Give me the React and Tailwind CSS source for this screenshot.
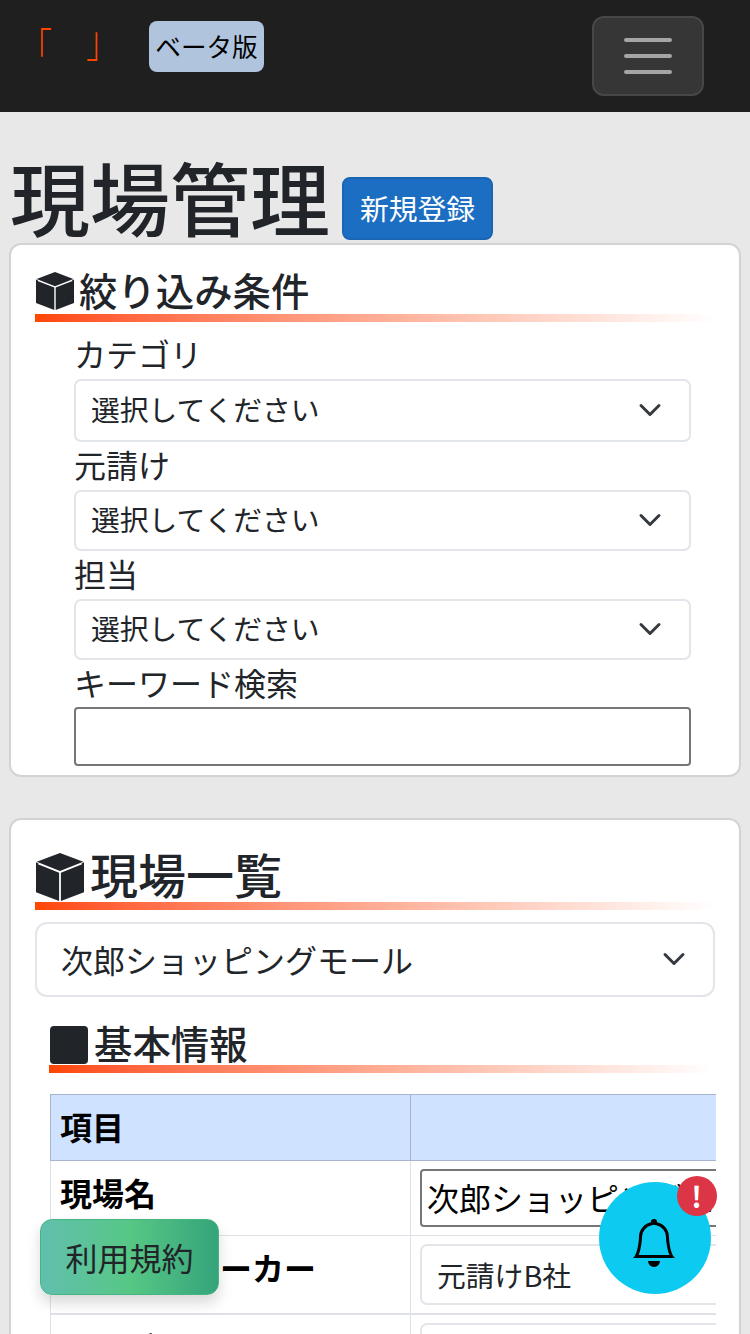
import React from "react";

function Cube({ className }) {
  return (
    <svg viewBox="0 0 38 38" className={className} fill="#212529">
      <path d="M19 0 L37.4 7 L19 14.2 L0.6 7 Z" />
      <path d="M0 7.4 V31 L18.3 38 V15.6 L1.5 9 L2 8.2 Z" />
      <path d="M38 7.4 V31 L19.7 38 V15.6 L36.5 9 L36 8.2 Z" />
    </svg>
  );
}

function Chevron() {
  return (
    <svg viewBox="0 0 16 16" className="h-[24px] w-[24px] shrink-0" fill="none" stroke="#343a40" strokeWidth="2" strokeLinecap="round" strokeLinejoin="round">
      <path d="m2 5 6 6 6-6" />
    </svg>
  );
}

function Rule({ className }) {
  return <div className={"h-[8px] bg-linear-to-r from-[#ff4500] to-white " + className} />;
}

function Field({ label, labelClass, boxClass }) {
  return (
    <div>
      <div className={"pb-[3px] text-[32px] leading-[45px] " + labelClass}>{label}</div>
      <div className={"flex items-center justify-between rounded-[7px] border-2 border-[#e2e5e9] pr-[27px] pb-[2px] pl-[15px] text-[28.8px] " + boxClass}>
        <span className="-mt-[2px] leading-[43px]">選択してください</span>
        <Chevron />
      </div>
    </div>
  );
}

export default function App() {
  return (
    <div className="relative h-[1334px] w-[750px] overflow-hidden bg-[#e8e8e8] text-[#212529] [font-family:'Noto_Sans_CJK_JP',sans-serif]">
      <header className="flex h-[112px] items-start bg-[#1f1f1f]">
        <div className="mt-[20px] ml-[20px] flex w-[129px] gap-[32px] text-[32px] leading-[48px] font-light text-[#ff4500]">
          <span className="translate-y-[2px] scale-y-[1.35]">「</span>
          <span className="translate-x-[2px] -translate-y-[6px] scale-y-[1.35]">」</span>
        </div>
        <div className="mt-[21px] flex h-[51px] w-[115px] items-center justify-center rounded-[8px] bg-[#b0c4de] pb-[2px] text-[25.6px] leading-[38px] text-black">
          ベータ版
        </div>
        <div className="mt-[16px] mr-[46px] ml-auto flex h-[80px] w-[112px] flex-col items-center justify-center gap-[12px] rounded-[12px] border-2 border-[#474747] bg-[#363636]">
          <i className="h-[4px] w-[48px] rounded-full bg-[#a5a5a5]" />
          <i className="h-[4px] w-[48px] rounded-full bg-[#a5a5a5]" />
          <i className="h-[4px] w-[48px] rounded-full bg-[#a5a5a5]" />
        </div>
      </header>

      <div className="flex h-[131px] items-start pl-[10px]">
        <h1 className="mt-[35px] w-[332px] text-[80px] leading-[96px] font-medium whitespace-nowrap">現場管理</h1>
        <button className="mt-[65px] flex h-[63px] w-[151px] items-center justify-center rounded-[8px] border-2 border-[#1a64b4] bg-[#1b6ec2] pb-[2px] text-[28.8px] leading-[43px] whitespace-nowrap text-white">
          新規登録
        </button>
      </div>

      <section className="mx-[9px] h-[534px] rounded-[12px] border-2 border-[#d3d3d3] bg-white px-[24px]">
        <h2 className="flex h-[69px] items-end text-[38.4px] leading-[46px] font-medium">
          <Cube className="mb-[4px] h-[38px] w-[40px]" />
          <span className="mb-[2px] ml-[4px]">絞り込み条件</span>
        </h2>
        <Rule className="" />
        <div className="pr-[24px] pl-[39px]">
          <Field label="カテゴリ" labelClass="mt-[9px]" boxClass="h-[63px]" />
          <Field label="元請け" labelClass="" boxClass="h-[61px]" />
          <Field label="担当" labelClass="" boxClass="h-[61px]" />
          <div className="pb-[2px] text-[32px] leading-[45px]">キーワード検索</div>
          <div className="h-[59px] rounded-[4px] border-2 border-[#767676]" />
        </div>
      </section>

      <section className="mx-[9px] mt-[41px] h-[640px] rounded-[12px] border-2 border-[#d3d3d3] bg-white px-[24px]">
        <h2 className="flex h-[82px] items-end text-[48px] leading-[58px] font-medium">
          <Cube className="mb-[1px] h-[48px] w-[50px]" />
          <span className="ml-[5px]">現場一覧</span>
        </h2>
        <Rule className="" />
        <div className="mt-[12px] flex h-[75px] items-center justify-between rounded-[12px] border-2 border-[#e2e5e9] pr-[27px] pb-[2px] pl-[24px] text-[32px]">
          <span className="leading-[48px]">次郎ショッピングモール</span>
          <Chevron />
        </div>
        <h3 className="ml-[15px] flex h-[68px] items-end text-[38.4px] leading-[46px] font-medium">
          <div className="mb-[1px] h-[38px] w-[38px] rounded-[4px] bg-[#212529]" />
          <span className="ml-[6px]">基本情報</span>
        </h3>
        <Rule className="ml-[14px]" />

        <div className="mt-[21px] ml-[15px] grid w-[666px] grid-cols-[360px_600px] overflow-hidden text-[32px] leading-[48px] text-black">
          <div className="h-[67px] border-y border-l border-[#a6b5cc] bg-[#cfe2ff] pt-[7px] pl-[9px] font-bold">項目</div>
          <div className="h-[67px] border border-[#a6b5cc] bg-[#cfe2ff]" />
          <div className="h-[75px] border-b border-l border-[#dee2e6] pt-[7px] pl-[9px] font-bold">現場名</div>
          <div className="h-[75px] border-b border-l border-[#dee2e6] pt-[8px] pl-[9px]">
            <div className="h-[58px] rounded-[4px] border-2 border-[#767676] pt-[2px] pl-[5px]">次郎ショッピングモール</div>
          </div>
          <div className="h-[79px] border-b-2 border-l border-[#dee2e6] pt-[7px] pl-[9px] font-bold whitespace-nowrap">元請け・メーカー</div>
          <div className="h-[79px] border-b-2 border-l border-[#dee2e6] pt-[8px] pl-[9px]">
            <div className="h-[61px] rounded-[7px] border-2 border-[#e2e5e9] pt-[7px] pl-[15px] text-[28.8px] leading-[43px] text-[#212529]">元請けB社</div>
          </div>
          <div className="h-[79px] border-l border-[#dee2e6] pt-[8px] pl-[8px] font-bold">カテゴリ</div>
          <div className="h-[79px] border-l border-[#dee2e6] pt-[8px] pl-[9px]">
            <div className="h-[61px] rounded-[7px] border-2 border-[#e2e5e9]" />
          </div>
        </div>
      </section>

      <button className="absolute top-[1219px] left-[40px] flex h-[76px] w-[179px] items-center justify-center rounded-[12px] border border-[#45b583] bg-linear-to-r from-[#61bfad] via-[#57c785] to-[#35a47b] text-[32px] leading-[48px] whitespace-nowrap shadow-[0_8px_14px_rgba(0,0,0,0.15)]">
        利用規約
      </button>

      <div className="absolute top-[1182px] left-[598.5px] flex h-[112px] w-[112px] items-center justify-center rounded-full bg-[#0dcaf0]">
        <svg viewBox="0 0 16 16" className="mt-[10px] -ml-px h-[48px] w-[48px]" fill="#000">
          <path d="M8 16a2 2 0 0 0 2-2H6a2 2 0 0 0 2 2M8 1.918l-.797.161A4 4 0 0 0 4 6c0 .628-.134 2.197-.459 3.742-.16.767-.376 1.566-.663 2.258h10.244c-.287-.692-.502-1.49-.663-2.258C12.134 8.197 12 6.628 12 6a4 4 0 0 0-3.203-3.92zM14.22 12c.223.447.481.801.78 1H1c.299-.199.557-.553.78-1C2.68 10.2 3 6.88 3 6c0-2.42 1.72-4.44 4.005-4.901a1 1 0 1 1 1.99 0A5 5 0 0 1 13 6c0 .88.32 4.2 1.22 6" />
        </svg>
      </div>
      <div className="absolute top-[1176px] left-[677px] flex h-[40px] w-[40px] items-center justify-center rounded-full bg-[#dc3545] pr-px text-[28.8px] leading-[40px] font-bold text-white">
        !
      </div>
    </div>
  );
}
